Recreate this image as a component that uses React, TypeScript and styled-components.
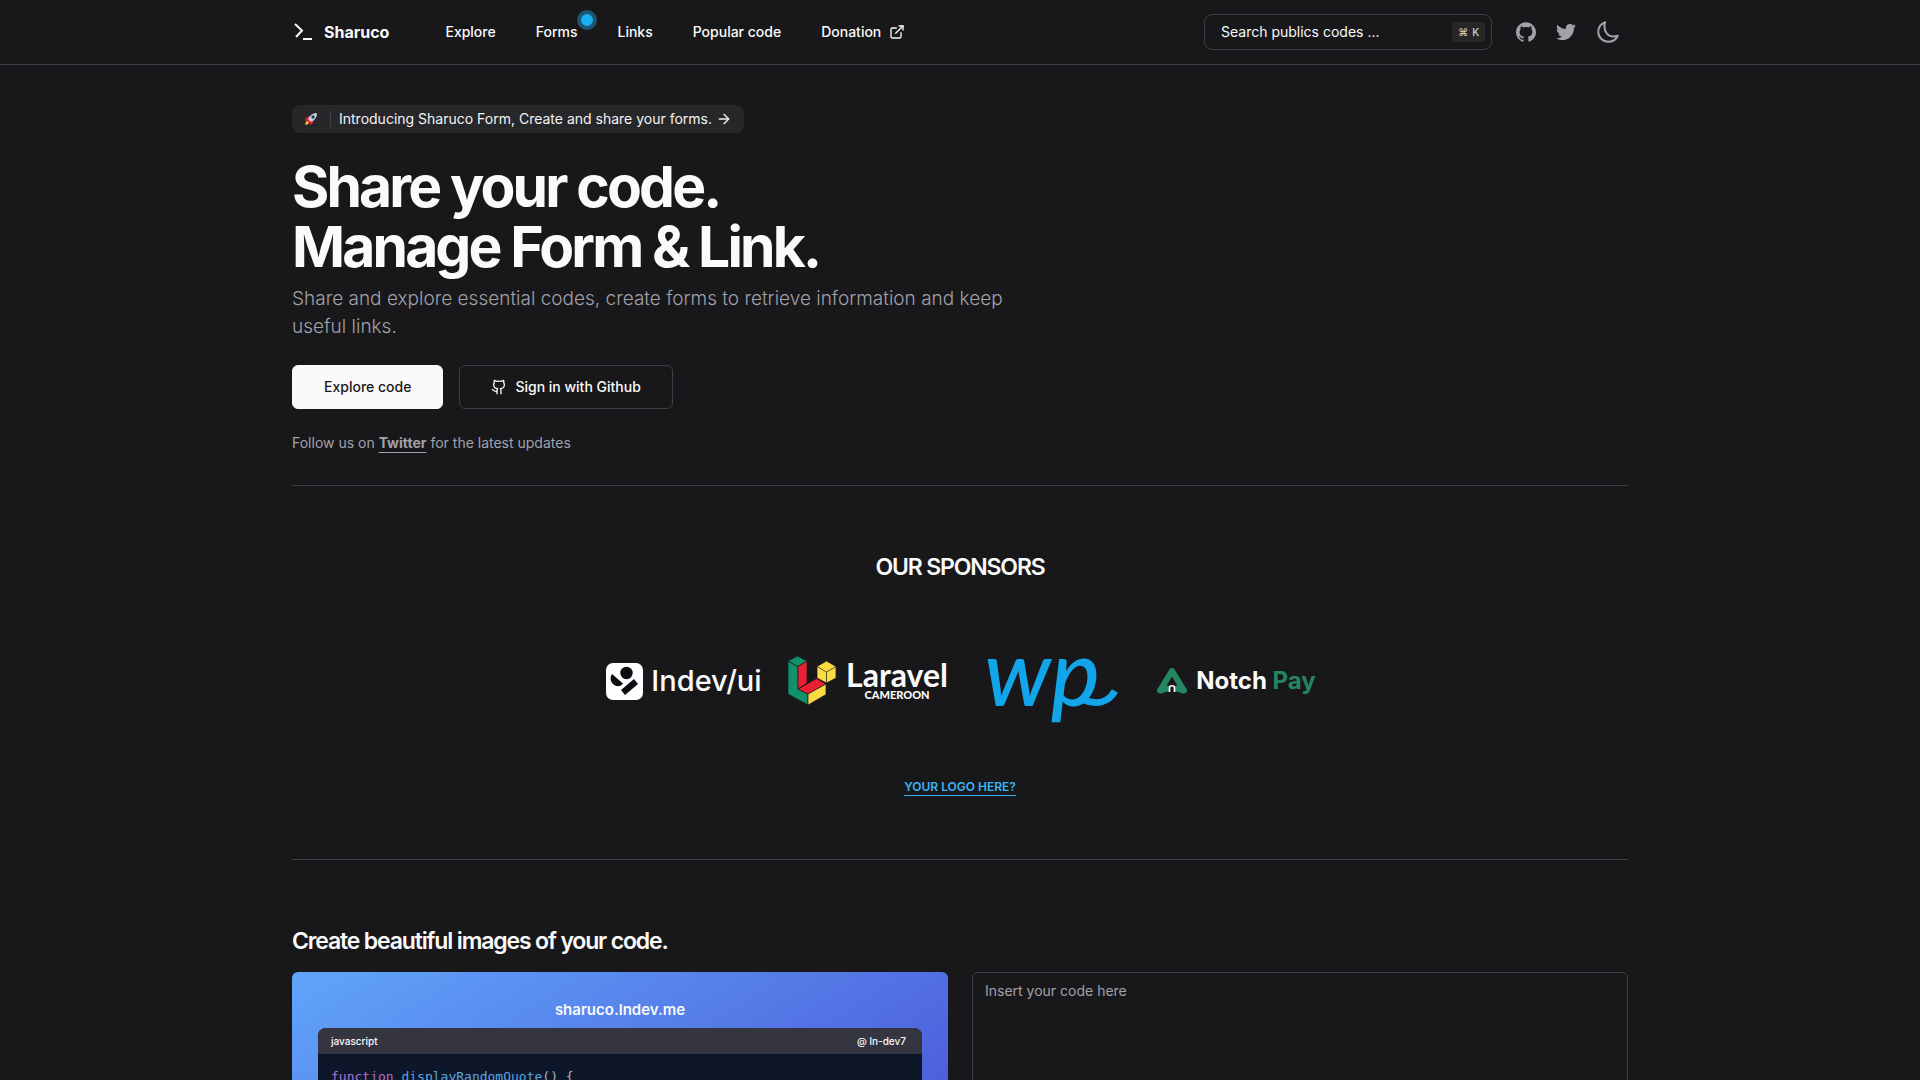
import React from "react";
import styled, { createGlobalStyle } from "styled-components";
import { Github, ArrowRight, ExternalLink } from "lucide-react";
import { SiGithub } from "react-icons/si";
import { FaTwitter } from "react-icons/fa";

const line = "#3f3f46";
const muted = "#a1a1aa";
const text = "#fafafa";

const GlobalStyle = createGlobalStyle`
  *, *::before, *::after { box-sizing: border-box; }
  html { background: #18181b; scrollbar-width: none; }
  body {
    margin: 0;
    background: #18181b;
    color: ${text};
    font-family: Inter, "Liberation Sans", sans-serif;
    font-size: 14px;
    line-height: 20px;
    -webkit-font-smoothing: antialiased;
  }
  h1, h2, p { margin: 0; }
  a { color: inherit; text-decoration: none; }
  button { font: inherit; color: inherit; cursor: pointer; }
`;

const Container = styled.div`
  width: 100%;
  max-width: 1400px;
  margin: 0 auto;
  padding: 0 32px;
`;

const Header = styled.header`
  border-bottom: 1px solid ${line};
`;

const HeaderRow = styled(Container)`
  display: flex;
  align-items: center;
  justify-content: space-between;
  height: 64px;
`;

const HeaderGroup = styled.div`
  display: flex;
  align-items: center;
`;

const Brand = styled.a`
  display: flex;
  align-items: center;
  gap: 8px;
  margin-right: 56px;
  font-size: 16px;
  font-weight: 700;
  line-height: 24px;
`;

const Nav = styled.nav`
  display: flex;
  gap: 40px;
`;

const NavLink = styled.a`
  position: relative;
  display: flex;
  align-items: center;
  gap: 8px;
  font-weight: 500;
`;

const NewDot = styled.span`
  position: absolute;
  top: -12px;
  right: -20px;
  width: 20px;
  height: 20px;
  border: 4px solid #1d5673;
  border-radius: 50%;
  background: #1caef2;
`;

const SearchButton = styled.button`
  display: flex;
  align-items: center;
  justify-content: space-between;
  width: 288px;
  height: 36px;
  margin-right: 14px;
  padding: 0 6px 0 16px;
  border: 1px solid ${line};
  border-radius: 8px;
  background: transparent;
`;

const Shortcut = styled.kbd`
  display: flex;
  align-items: center;
  gap: 4px;
  height: 20px;
  padding: 0 6px;
  border-radius: 4px;
  background: #27272a;
  color: #d4d4d8;
  font-family: Inter, "DejaVu Sans", sans-serif;
  font-size: 10px;
  font-weight: 500;
`;

const IconLink = styled.a`
  display: flex;
  align-items: center;
  justify-content: center;
  width: 40px;
  height: 40px;
  color: ${muted};
`;

const IconButton = styled.button`
  display: flex;
  align-items: center;
  justify-content: center;
  width: 40px;
  height: 40px;
  margin-left: 2px;
  padding: 0;
  border: 0;
  background: transparent;
  color: ${muted};
`;

const Hero = styled.section`
  display: flex;
  flex-direction: column;
  align-items: flex-start;
  padding: 40px 0 32px;
  border-bottom: 1px solid ${line};
`;

const Announcement = styled.a`
  display: flex;
  align-items: center;
  height: 28px;
  padding: 0 12px;
  border-radius: 8px;
  background: #27272a;
  color: #f4f4f5;
`;

const Separator = styled.span`
  width: 1px;
  height: 16px;
  margin: 0 8px 0 12px;
  background: ${line};
`;

const ArrowIcon = styled(ArrowRight)`
  margin-left: 4px;
`;

const Title = styled.h1`
  margin-top: 24px;
  font-size: 57px;
  font-weight: 700;
  line-height: 60px;
  letter-spacing: -0.05em;
`;

const Lead = styled.p`
  max-width: 750px;
  margin-top: 8px;
  color: ${muted};
  font-size: 19px;
  font-weight: 300;
  line-height: 28px;
`;

const Actions = styled.div`
  display: flex;
  gap: 16px;
  margin-top: 24px;
`;

const ActionLink = styled.a<{ $solid?: boolean }>`
  display: flex;
  align-items: center;
  gap: 8px;
  height: 44px;
  padding: 0 31px;
  border: 1px solid ${(p) => (p.$solid ? text : line)};
  border-radius: 6px;
  background: ${(p) => (p.$solid ? text : "transparent")};
  color: ${(p) => (p.$solid ? "#18181b" : text)};
  font-weight: 500;
`;

const Follow = styled.p`
  margin-top: 24px;
  color: ${muted};
`;

const FollowLink = styled.a`
  font-weight: 700;
  text-decoration: underline;
  text-underline-offset: 4px;
`;

const Sponsors = styled.section`
  display: flex;
  flex-direction: column;
  align-items: center;
  padding: 64px 0;
  border-bottom: 1px solid ${line};
`;

const SectionTitle = styled.h2`
  font-size: 23px;
  font-weight: 600;
  line-height: 34px;
  letter-spacing: -0.05em;
`;

const SponsorRow = styled.div`
  display: flex;
  align-items: center;
  justify-content: center;
  height: 130px;
  margin: 32px 0;
`;

const Sponsor = styled.a<{ $gap?: number }>`
  display: flex;
  align-items: center;
  justify-content: center;
  gap: ${(p) => p.$gap ?? 8}px;
  width: 184px;
  white-space: nowrap;
`;

const IndevName = styled.span`
  font-size: 29px;
  font-weight: 500;
  line-height: 36px;
`;

const LaravelName = styled.span`
  display: flex;
  flex-direction: column;
  align-items: center;
  font-family: Lato, sans-serif;
  font-size: 32px;
  font-weight: 700;
  line-height: 28px;
`;

const LaravelRegion = styled.span`
  font-size: 11px;
  font-weight: 900;
  line-height: 12px;
`;

const ScriptName = styled.span`
  position: relative;
  margin: 0 20px 20px 0;
  color: #12a5ea;
  font-family: Lato, sans-serif;
  font-size: 92px;
  font-style: italic;
  font-weight: 500;
  line-height: 92px;
`;

const Swash = styled.svg`
  position: absolute;
  right: -18px;
  bottom: 8px;
`;

const NotchName = styled.span`
  font-size: 24px;
  font-weight: 700;
  line-height: 32px;
`;

const NotchAccent = styled.span`
  color: #23865f;
`;

const LogoLink = styled.a`
  color: #38b6f1;
  font-size: 12px;
  font-weight: 600;
  line-height: 17px;
  text-decoration: underline;
  text-underline-offset: 4px;
`;

const Create = styled.section`
  padding: 64px 0;
`;

const Columns = styled.div`
  display: grid;
  grid-template-columns: 1fr 1fr;
  gap: 24px;
  height: 400px;
  margin-top: 14px;
`;

const Preview = styled.div`
  display: flex;
  flex-direction: column;
  padding: 26px;
  border-radius: 6px;
  background: linear-gradient(to bottom right, #60a5fa, #4338ca);
`;

const PreviewTitle = styled.p`
  margin-bottom: 6px;
  font-size: 15px;
  font-weight: 600;
  line-height: 24px;
  text-align: center;
`;

const Editor = styled.div`
  flex: 1;
  overflow: hidden;
  border-radius: 8px;
  background: #0d1729;
`;

const EditorBar = styled.div`
  display: flex;
  align-items: center;
  justify-content: space-between;
  height: 26px;
  padding: 0 16px 0 13px;
  background: #353541;
  font-size: 10px;
  font-weight: 500;
`;

const Code = styled.pre`
  margin: 0;
  padding: 13px;
  color: #abb2bf;
  font-family: "DejaVu Sans Mono", monospace;
  font-size: 13px;
  line-height: 20px;
`;

const Keyword = styled.span`
  color: #b46fd0;
`;

const FunctionName = styled.span`
  color: #5aa5e0;
`;

const CodeInput = styled.textarea`
  width: 100%;
  padding: 8px 12px;
  border: 1px solid ${line};
  border-radius: 6px;
  outline: 0;
  resize: none;
  background: transparent;
  color: ${text};
  font: inherit;
  &::placeholder { color: ${muted}; opacity: 1; }
`;

const BrandMark = () => (
  <svg width="24" height="24" viewBox="0 0 24 24" fill="none" stroke="currentColor" strokeWidth="2" aria-hidden="true">
    <path d="M3 4l7 6.500-6 6.500M11 19h9" />
  </svg>
);

const MoonIcon = () => (
  <svg width="24" height="24" viewBox="0 0 512 512" fill="none" stroke="currentColor" strokeWidth="42" strokeLinejoin="round" aria-hidden="true">
    <path d="M180 136c0-30.620 4.510-61.610 16-88C109.570 81.270 48 159.320 48 248c0 119.290 96.710 216 216 216 88.680 0 166.730-51.570 200-128-26.390 11.490-57.380 16-88 16-119.290 0-196-96.710-196-216z" />
  </svg>
);

const Rocket = () => (
  <svg width="14" height="14" viewBox="0 0 14 14" aria-hidden="true">
    <path d="M1 8l2-3 3-1-2 5zM6 13l3-2 1-4-4 2z" fill="#d52c35" />
    <path d="M4 8C5 4 8 1 13 1c0 5-3 8-7 9z" fill="#c8d0d8" />
    <circle cx="9" cy="5" r="1.700" fill="#27405c" />
    <path d="M4 7l3 3-2 1-1 2-1-1-2 1 1-3-1-1z" fill="#d52c35" />
    <path d="M3 9l2 2-1 1-3 1 1-3z" fill="#fbc02f" />
  </svg>
);

const IndevMark = () => (
  <svg width="37" height="37" viewBox="0 0 37 37" aria-hidden="true">
    <rect width="37" height="37" rx="7" fill="#fff" />
    <circle cx="20.500" cy="10" r="6.200" fill="#0b0d12" />
    <path d="M6 11l11 9.500c-3 4-8 3-10.500 0S4 14 6 11z" fill="#0b0d12" />
    <path d="M28 16l4 5-13 11-4-5z" fill="#0b0d12" />
  </svg>
);

const LaravelMark = () => (
  <svg width="48" height="50" viewBox="0 0 48 50" stroke="#18181b" strokeWidth="0.700" strokeLinejoin="round" aria-hidden="true">
    <path d="M0 5L10 10.500V33l10 5v11L0 38z" fill="#12926b" />
    <path d="M0 5L9.500 0 19 5l-9 5.500z" fill="#12926b" />
    <path d="M10 10.500L19 5v22l-9 6z" fill="#ea2134" />
    <path d="M10 33l18.500-10.500L38 28l-18 10z" fill="#ea2134" />
    <path d="M20 38l18-10v10.500L20 49z" fill="#fadb43" />
    <path d="M29 10.500L38.500 5 48 10.500V22l-9.500 5L29 22z" fill="#fadb43" />
    <path d="M29 10.500l9.500 5.500 9.500-5.500M38.500 16v11" fill="none" />
  </svg>
);

const NotchMark = () => (
  <svg width="32" height="26" viewBox="0 0 32 26" aria-hidden="true">
    <path d="M16 3L4 22.500M16 3l12 19.500M4 22.500l7-2M28 22.500l-7-2" fill="none" stroke="#23865f" strokeWidth="6" strokeLinecap="round" strokeLinejoin="round" />
    <path d="M13.500 24v-4c0-3 5-3 5 0v4" fill="none" stroke="#fff" strokeWidth="1.700" />
  </svg>
);

export default function App() {
  return (
    <>
      <GlobalStyle />
      <Header>
        <HeaderRow>
          <HeaderGroup>
            <Brand href="#"><BrandMark />Sharuco</Brand>
            <Nav aria-label="Main">
              <NavLink href="#explore">Explore</NavLink>
              <NavLink href="#forms">Forms<NewDot /></NavLink>
              <NavLink href="#links">Links</NavLink>
              <NavLink href="#popular">Popular code</NavLink>
              <NavLink href="#donation">Donation<ExternalLink size={16} /></NavLink>
            </Nav>
          </HeaderGroup>
          <HeaderGroup>
            <SearchButton type="button">Search publics codes ...<Shortcut><span>⌘</span>K</Shortcut></SearchButton>
            <IconLink href="#github" aria-label="GitHub"><SiGithub size={20} /></IconLink>
            <IconLink href="#twitter" aria-label="Twitter"><FaTwitter size={20} /></IconLink>
            <IconButton type="button" aria-label="Toggle theme"><MoonIcon /></IconButton>
          </HeaderGroup>
        </HeaderRow>
      </Header>
      <Container as="main">
        <Hero>
          <Announcement href="#forms">
            <Rocket /><Separator />Introducing Sharuco Form, Create and share your forms.<ArrowIcon size={16} />
          </Announcement>
          <Title>Share your code.<br />Manage Form &amp; Link.</Title>
          <Lead>Share and explore essential codes, create forms to retrieve information and keep useful links.</Lead>
          <Actions>
            <ActionLink href="#explore" $solid>Explore code</ActionLink>
            <ActionLink href="#signin"><Github size={16} />Sign in with Github</ActionLink>
          </Actions>
          <Follow>Follow us on <FollowLink href="#twitter">Twitter</FollowLink> for the latest updates</Follow>
        </Hero>
        <Sponsors>
          <SectionTitle>OUR SPONSORS</SectionTitle>
          <SponsorRow>
            <Sponsor href="#indev"><IndevMark /><IndevName>Indev/ui</IndevName></Sponsor>
            <Sponsor href="#laravel" $gap={10}><LaravelMark /><LaravelName>Laravel<LaravelRegion>CAMEROON</LaravelRegion></LaravelName></Sponsor>
            <Sponsor href="#wp">
              <ScriptName>
                wp
                <Swash width="36" height="28" viewBox="0 0 36 28" fill="none" stroke="currentColor" strokeWidth="7" aria-hidden="true">
                  <path d="M2 19c12 5 24 3 31-9" />
                </Swash>
              </ScriptName>
            </Sponsor>
            <Sponsor href="#notch"><NotchMark /><NotchName>Notch <NotchAccent>Pay</NotchAccent></NotchName></Sponsor>
          </SponsorRow>
          <LogoLink href="#sponsor">YOUR LOGO HERE?</LogoLink>
        </Sponsors>
        <Create>
          <SectionTitle>Create beautiful images of your code.</SectionTitle>
          <Columns>
            <Preview>
              <PreviewTitle>sharuco.lndev.me</PreviewTitle>
              <Editor>
                <EditorBar><span>javascript</span><span>@ ln-dev7</span></EditorBar>
                <Code><Keyword>function</Keyword> <FunctionName>displayRandomQuote</FunctionName>() {"{"}</Code>
              </Editor>
            </Preview>
            <CodeInput aria-label="Code" placeholder="Insert your code here" />
          </Columns>
        </Create>
      </Container>
    </>
  );
}
